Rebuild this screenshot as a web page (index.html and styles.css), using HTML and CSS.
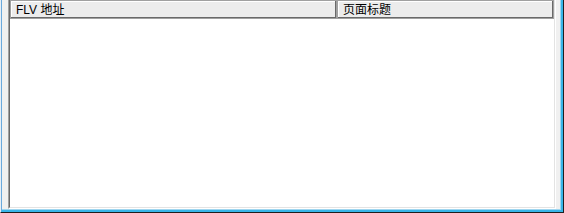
FILE: index.html
```html
<!DOCTYPE html>
<html lang="zh-CN">
<head>
    <meta charset="UTF-8">
    <title>FLV 列表</title>
    <link rel="stylesheet" href="styles.css">
</head>
<body>
    <div class="janela">
        <div class="painel">
            <div class="lista">
                <div class="lista-interna">
                    <div class="cabecalho">
                        <div class="coluna col-url">FLV 地址</div>
                        <div class="coluna col-titulo">页面标题</div>
                    </div>
                    <div class="linhas"></div>
                </div>
            </div>
        </div>
    </div>
</body>
</html>
```

FILE: styles.css
```css
/* Estilos gerais */
body {
    margin: 0;
    width: 564px;
    height: 213px;
    overflow: hidden;
    background-color: #f0f0f0;
    font-family: "Liberation Sans", "Noto Sans CJK SC", sans-serif;
    font-size: 12px;
    color: #000;
}

.janela {
    width: 564px;
    height: 213px;
    box-sizing: border-box;
    display: flex;
    border-left: 1px solid #e6eef6;
    border-right: 1px solid #1f1f1f;
    border-bottom: 1px solid #1f1f1f;
}

.painel {
    flex: 1;
    display: flex;
    padding: 0 5px 1px 6px;
    border-left: 1px solid #6aa9dc;
    border-right: 2px solid #37b5e8;
    border-bottom: 2px solid #37b5e8;
    box-shadow: inset -1px -1px 0 #9fd6f0;
}

.lista {
    flex: 1;
    display: flex;
    border-left: 1px solid #a0a0a0;
    border-right: 1px solid #fff;
    border-bottom: 1px solid #fff;
}

.lista-interna {
    flex: 1;
    display: flex;
    flex-direction: column;
    background-color: #fff;
    border-left: 1px solid #696969;
    border-right: 1px solid #e3e3e3;
    border-bottom: 1px solid #e3e3e3;
}

.cabecalho {
    display: flex;
    height: 19px;
    background-color: #ececec;
}

.coluna {
    box-sizing: border-box;
    height: 19px;
    line-height: 16px;
    padding: 1px 0 0 5px;
    border: 1px solid #a0a0a0;
    box-shadow: inset -1px -1px 0 #696969, inset 1px 1px 0 #fff;
    white-space: nowrap;
    overflow: hidden;
}

.col-url {
    width: 327px;
}

.col-titulo {
    flex: 1;
}

.linhas {
    flex: 1;
}
```
